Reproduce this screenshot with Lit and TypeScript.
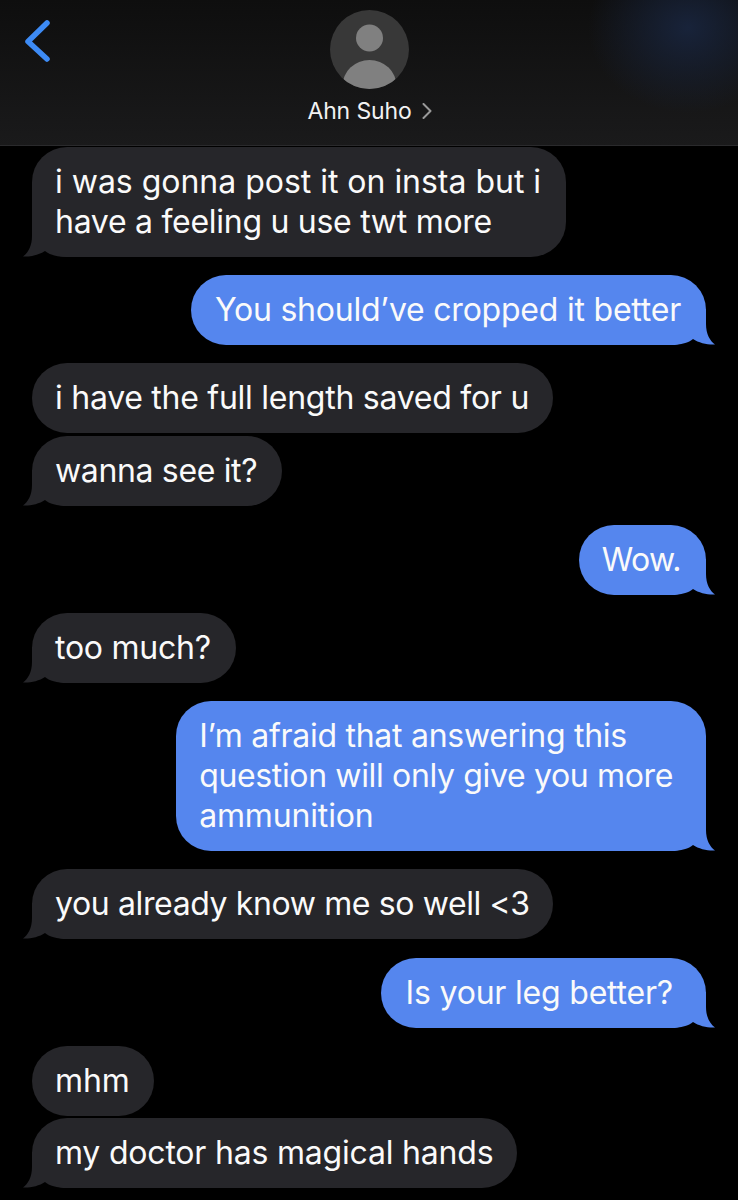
import { LitElement, html, css, svg } from "lit";
import { customElement } from "lit/decorators.js";

type Line = { s: string; ls: number };
type Msg = { t: Line[]; me?: boolean; gap: number; tail?: boolean; pl?: number; pr?: number };

const l = (s: string, ls = -0.35): Line => ({ s, ls });

const MSGS: Msg[] = [
  { t: [l("i was gonna post it on insta but i", -0.02), l("have a feeling u use twt more", -0.28)], gap: 0, tail: true },
  { t: [l("You should\u2019ve cropped it better", -0.22)], me: true, gap: 18, tail: true, pl: 24 },
  { t: [l("i have the full length saved for u", -0.26)], gap: 18, pr: 24 },
  { t: [l("wanna see it?")], gap: 3, tail: true },
  { t: [l("Wow.", -0.55)], me: true, gap: 19, tail: true },
  { t: [l("too much?", -0.25)], gap: 18, tail: true },
  { t: [l("I\u2019m afraid that answering this", -0.28), l("question will only give you more"), l("ammunition", -0.15)], me: true, gap: 18, tail: true, pr: 33 },
  { t: [l("you already know me so well <3", -0.38)], gap: 18, tail: true, pr: 23 },
  { t: [l("Is your leg better?", -0.2)], me: true, gap: 19, tail: true, pl: 25, pr: 33 },
  { t: [l("mhm", -0.1)], gap: 18, pr: 24 },
  { t: [l("my doctor has magical hands", -0.2)], gap: 2, tail: true, pr: 24 },
];

@customElement("app-root")
export class AppRoot extends LitElement {
  static styles = css`
    :host {
      display: block;
      width: 738px;
      height: 1200px;
      overflow: hidden;
      background: #000;
      font-family: Inter, "Liberation Sans", sans-serif;
      color: #fff;
    }
    .head {
      height: 146px;
      box-sizing: border-box;
      border-bottom: 1px solid #2a2a2c;
      background:
        radial-gradient(ellipse 100px 85px at 688px 28px, #18233a 0%, rgba(24, 35, 58, 0.5) 50%, rgba(24, 35, 58, 0) 100%),
        linear-gradient(180deg, #0e0e0e 0%, #1a1a1b 100%);
      position: relative;
      display: flex;
      flex-direction: column;
      align-items: center;
      padding-top: 10px;
    }
    .back {
      position: absolute;
      left: 18px;
      top: 18px;
    }
    .avatar {
      display: block;
    }
    .name {
      margin-top: 8px;
      font-size: 23px;
      line-height: 28px;
      display: flex;
      align-items: center;
      gap: 10px;
      color: #f2f2f2;
      letter-spacing: -0.15px;
      padding-left: 1px;
    }
    .list {
      display: flex;
      flex-direction: column;
      padding: 1px 32px 0;
    }
    .b {
      position: relative;
      width: fit-content;
      padding: 15px 25px 15px 23px;
      border-radius: 35px;
      background: #26262a;
      font-size: 32px;
      line-height: 40px;
      white-space: nowrap;
      color: #fafafa;
    }
    .b.me {
      align-self: flex-end;
      background: #5586ee;
    }
    .line {
      display: block;
      position: relative;
      z-index: 1;
    }
    .tail {
      position: absolute;
      bottom: 0;
      width: 46px;
      height: 36px;
    }
    .them .tail {
      left: -10px;
    }
    .me .tail {
      right: -10px;
      transform: scaleX(-1);
    }
  `;

  private tail(me: boolean) {
    const d = "M10 0V15C10 25 6 32 1 35.5C8 36 17 34 23 30C27 33.5 35 36 45 36H46V0Z";
    return html`<svg class="tail" viewBox="0 0 46 36">${svg`<path d=${d} fill=${me ? "#5586ee" : "#26262a"} />`}</svg>`;
  }

  render() {
    return html`
      <div class="head">
        <svg class="back" width="42" height="48" viewBox="0 0 42 48">
          <path d="M29 5L10 23.5L29 41" fill="none" stroke="#3d8bf5" stroke-width="5.5" stroke-linecap="round" stroke-linejoin="round" />
        </svg>
        <svg class="avatar" width="79" height="79" viewBox="0 0 79 79">
          <defs><clipPath id="c"><circle cx="39.5" cy="39.5" r="39.5" /></clipPath></defs>
          <circle cx="39.5" cy="39.5" r="39.5" fill="#383838" />
          <g clip-path="url(#c)" fill="#808080">
            <circle cx="39.5" cy="28" r="13.5" />
            <ellipse cx="39.5" cy="76" rx="27" ry="26" />
          </g>
        </svg>
        <div class="name">
          <span>Ahn Suho</span>
          <svg width="10" height="16" viewBox="0 0 10 16">
            <path d="M1.5 1L8.5 8L1.5 15" fill="none" stroke="#999" stroke-width="2" stroke-linecap="round" stroke-linejoin="round" />
          </svg>
        </div>
      </div>
      <div class="list">
        ${MSGS.map(
          (m) => html`<div
            class="b ${m.me ? "me" : "them"}"
            style="margin-top:${m.gap}px;${m.pl ? `padding-left:${m.pl}px;` : ""}${m.pr ? `padding-right:${m.pr}px` : ""}"
          >
            ${m.t.map((x) => html`<span class="line" style="letter-spacing:${x.ls}px">${x.s}</span>`)}
            ${m.tail ? this.tail(!!m.me) : ""}
          </div>`
        )}
      </div>
    `;
  }
}
